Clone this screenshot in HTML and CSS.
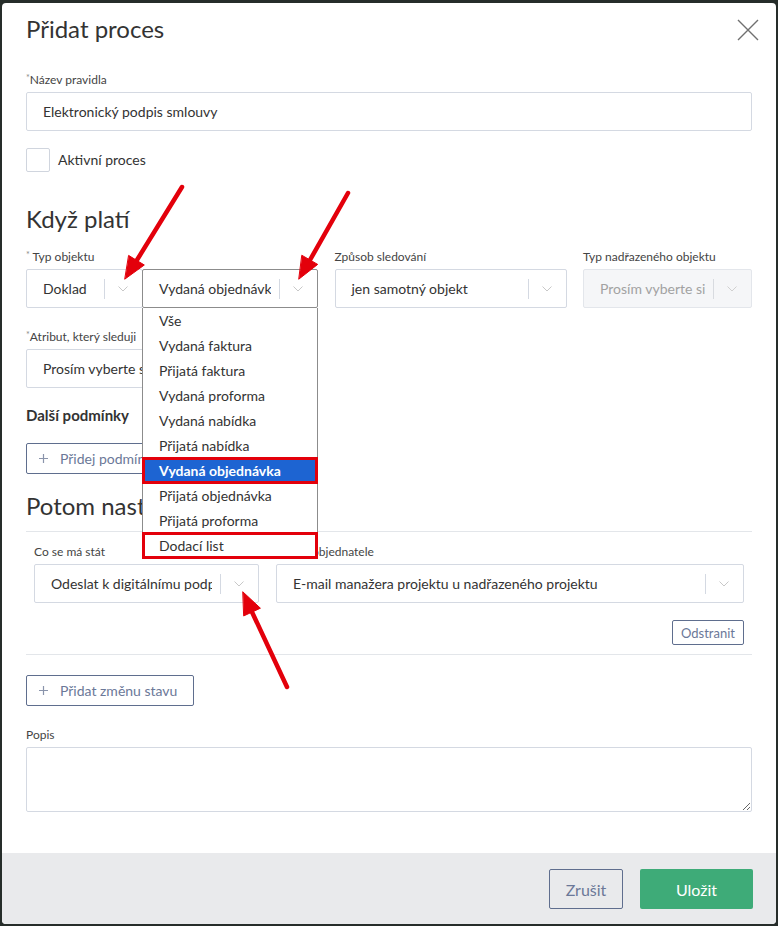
FILE: index.html
```html
<!DOCTYPE html>
<html lang="cs">
<head>
    <meta charset="UTF-8">
    <meta name="viewport" content="width=device-width, initial-scale=1.0">
    <title>Přidat proces</title>
    <link rel="stylesheet" href="styles.css">
</head>
<body>

    <!-- Modal -->
    <div class="modal">
        <div class="modal-header">
            <h1 class="modal-title">Přidat proces</h1>
            <button class="close" type="button" aria-label="Zavřít">
                <svg width="22" height="22" viewBox="0 0 22 22"><path d="M1 1 L21 21 M21 1 L1 21" stroke="#707070" stroke-width="1.4" fill="none"/></svg>
            </button>
        </div>

        <div class="modal-body">
            <div class="field">
                <label class="label"><span class="req">*</span>Název pravidla</label>
                <input class="input" type="text" value="Elektronický podpis smlouvy">
            </div>

            <div class="check-row">
                <span class="checkbox"></span>
                <span>Aktivní proces</span>
            </div>

            <h2 class="section-title">Když platí</h2>

            <div class="row">
                <div class="col col-type">
                    <label class="label"><span class="req req-space">*</span> Typ objektu</label>
                    <div class="select-group">
                        <div class="select select-doc">
                            <div class="select-value">Doklad</div>
                            <div class="select-arrow"><span class="sep"></span><svg class="chev" width="10" height="6" viewBox="0 0 10 6"><path d="M0.5 0.5 L5 5 L9.5 0.5" stroke="#c8c8c8" fill="none"/></svg></div>
                        </div>
                        <div class="select-wrap">
                            <div class="select select-focus">
                                <div class="select-value">Vydaná objednávka</div>
                                <div class="select-arrow"><span class="sep"></span><svg class="chev" width="10" height="6" viewBox="0 0 10 6"><path d="M0.5 0.5 L5 5 L9.5 0.5" stroke="#c8c8c8" fill="none"/></svg></div>
                            </div>
                            <ul class="menu">
                                <li>Vše</li>
                                <li>Vydaná faktura</li>
                                <li>Přijatá faktura</li>
                                <li>Vydaná proforma</li>
                                <li>Vydaná nabídka</li>
                                <li>Přijatá nabídka</li>
                                <li class="active marked">Vydaná objednávka</li>
                                <li>Přijatá objednávka</li>
                                <li>Přijatá proforma</li>
                                <li class="marked">Dodací list</li>
                            </ul>
                        </div>
                    </div>
                </div>
                <div class="col col-track">
                    <label class="label">Způsob sledování</label>
                    <div class="select">
                        <div class="select-value">jen samotný objekt</div>
                        <div class="select-arrow"><span class="sep"></span><svg class="chev" width="10" height="6" viewBox="0 0 10 6"><path d="M0.5 0.5 L5 5 L9.5 0.5" stroke="#c8c8c8" fill="none"/></svg></div>
                    </div>
                </div>
                <div class="col col-parent">
                    <label class="label">Typ nadřazeného objektu</label>
                    <div class="select disabled">
                        <div class="select-value">Prosím vyberte si</div>
                        <div class="select-arrow"><span class="sep"></span><svg class="chev" width="10" height="6" viewBox="0 0 10 6"><path d="M0.5 0.5 L5 5 L9.5 0.5" stroke="#d0d0d0" fill="none"/></svg></div>
                    </div>
                </div>
            </div>

            <div class="field field-attr">
                <label class="label"><span class="req">*</span>Atribut, který sleduji</label>
                <div class="select">
                    <div class="select-value">Prosím vyberte si</div>
                    <div class="select-arrow"><span class="sep"></span><svg class="chev" width="10" height="6" viewBox="0 0 10 6"><path d="M0.5 0.5 L5 5 L9.5 0.5" stroke="#c8c8c8" fill="none"/></svg></div>
                </div>
            </div>

            <h3 class="sub-title">Další podmínky</h3>
            <button class="btn btn-outline btn-add" type="button">
                <svg class="plus" width="9" height="9" viewBox="0 0 9 9"><path d="M4.5 0 V9 M0 4.5 H9" stroke="#8a94ab" stroke-width="1.2"/></svg>
                Přidej podmínku
            </button>

            <h2 class="section-title section-then">Potom nastavit</h2>

            <div class="action-panel">
                <div class="action-row">
                    <div class="action-what">
                        <label class="label">Co se má stát</label>
                        <div class="select">
                            <div class="select-value">Odeslat k digitálnímu podpisu</div>
                            <div class="select-arrow"><span class="sep"></span><svg class="chev" width="10" height="6" viewBox="0 0 10 6"><path d="M0.5 0.5 L5 5 L9.5 0.5" stroke="#c8c8c8" fill="none"/></svg></div>
                        </div>
                    </div>
                    <div class="action-who">
                        <label class="label">E-mail objednatele</label>
                        <div class="select">
                            <div class="select-value">E-mail manažera projektu u nadřazeného projektu</div>
                            <div class="select-arrow"><span class="sep"></span><svg class="chev" width="10" height="6" viewBox="0 0 10 6"><path d="M0.5 0.5 L5 5 L9.5 0.5" stroke="#c8c8c8" fill="none"/></svg></div>
                        </div>
                    </div>
                </div>
                <div class="action-foot">
                    <button class="btn btn-outline btn-small" type="button">Odstranit</button>
                </div>
            </div>

            <button class="btn btn-outline btn-add btn-state" type="button">
                <svg class="plus" width="9" height="9" viewBox="0 0 9 9"><path d="M4.5 0 V9 M0 4.5 H9" stroke="#8a94ab" stroke-width="1.2"/></svg>
                Přidat změnu stavu
            </button>

            <div class="field field-note">
                <label class="label">Popis</label>
                <textarea class="textarea"></textarea>
            </div>
        </div>

        <div class="modal-footer">
            <button class="btn btn-outline btn-cancel" type="button">Zrušit</button>
            <button class="btn btn-save" type="button">Uložit</button>
        </div>
    </div>

    <!-- Red annotation arrows -->
    <svg class="arrows" width="778" height="926" viewBox="0 0 778 926">
        <g stroke="#e3000b" stroke-width="4.5" stroke-linecap="round" fill="#e3000b">
            <line x1="182" y1="187" x2="137" y2="260"/>
            <polygon points="125,279 144.3,265 128.9,255.6" stroke-width="1"/>
            <line x1="348" y1="193" x2="310" y2="260"/>
            <polygon points="299,279 317.7,264.4 302.1,255.4" stroke-width="1"/>
            <line x1="287" y1="687" x2="252" y2="612"/>
            <polygon points="243,592 260.4,608.2 244,615.8" stroke-width="1"/>
        </g>
    </svg>

</body>
</html>
```

FILE: styles.css
```css
/* Page / backdrop */
* {
    box-sizing: border-box;
}

body {
    margin: 0;
    background: #262d2a;
    font-family: "Lato", "Noto Sans", sans-serif;
    font-size: 14px;
    color: #333;
}

/* Modal */
.modal {
    margin: 3px 2px 2px 2px;
    height: 921px;
    background: #fff;
    border-radius: 4px;
    overflow: hidden;
    display: flex;
    flex-direction: column;
}

.modal-header {
    display: flex;
    justify-content: space-between;
    align-items: flex-start;
    padding: 11px 17px 0 24px;
}

.modal-title {
    margin: 0;
    font-size: 24px;
    line-height: 30px;
    font-weight: 400;
    color: #333;
}

.close {
    margin-top: 5px;
    padding: 0;
    border: 0;
    background: none;
    width: 22px;
    height: 22px;
}

.close svg {
    display: block;
}

.modal-body {
    flex: 1;
    padding: 28px 24px 0 24px;
}

/* Fields */
.label {
    display: block;
    font-size: 12px;
    line-height: 16px;
    margin-bottom: 4px;
    color: #444;
}

.req {
    font-size: 9px;
    vertical-align: top;
    line-height: 12px;
    color: #8a8a8a;
}

.input {
    display: block;
    width: 100%;
    height: 39px;
    padding: 0 16px;
    border: 1px solid #d4d9e2;
    border-radius: 2px;
    font-family: inherit;
    font-size: 14px;
    color: #333;
}

.check-row {
    display: flex;
    align-items: center;
    gap: 8px;
    margin-top: 17px;
    line-height: 20px;
}

.checkbox {
    width: 24px;
    height: 24px;
    border: 1px solid #d0d5de;
    border-radius: 2px;
}

.section-title {
    margin: 32px 0 15px 0;
    font-size: 24px;
    line-height: 30px;
    font-weight: 400;
    color: #333;
}

.section-then {
    margin: 17px 0 10px 0;
}

.sub-title {
    margin: 17px 0 18px 0;
    font-size: 15px;
    line-height: 20px;
    font-weight: 700;
    color: #333;
}

/* Selects */
.row {
    display: flex;
    justify-content: space-between;
}

.col-type {
    width: 292px;
}

.col-track {
    width: 232px;
}

.col-parent {
    width: 169px;
}

.select-group {
    display: flex;
}

.select {
    display: flex;
    height: 39px;
    border: 1px solid #d4d9e2;
    border-radius: 2px;
    background: #fff;
}

.select-value {
    flex: 1;
    min-width: 0;
    margin-right: 8px;
    padding-left: 16px;
    line-height: 37px;
    white-space: nowrap;
    overflow: hidden;
}

.select-arrow {
    width: 38px;
    display: flex;
    align-items: center;
}

.select-arrow .sep {
    width: 1px;
    height: 20px;
    background: #d4d9e2;
}

.select-arrow .chev {
    margin-left: 13px;
}

.select-doc {
    width: 118px;
}

.select-wrap {
    position: relative;
    width: 176px;
    margin-left: -1px;
}

.select-focus {
    border-color: #8c8c8c;
}

.select.disabled {
    background: #f5f6f8;
    border-color: #e3e6eb;
    color: #a2a2a2;
}

.select.disabled .sep {
    background: #d8dbe0;
}

/* Dropdown menu */
.menu {
    position: absolute;
    top: 100%;
    left: 0;
    right: 0;
    z-index: 5;
    margin: 0;
    padding: 0;
    list-style: none;
    background: #fff;
    border: 1px solid #8c8c8c;
    border-top: 0;
}

.menu li {
    height: 25px;
    line-height: 25px;
    padding-left: 16px;
    color: #333;
}

.menu li.active {
    background: #1d64d2;
    color: #fff;
    font-weight: 700;
}

.menu li.marked {
    outline: 3px solid #e3000b;
    outline-offset: -2px;
}

.field-attr {
    margin-top: 21px;
    width: 292px;
}

/* Buttons */
.btn {
    font-family: inherit;
    border-radius: 2px;
    cursor: pointer;
}

.btn-outline {
    background: #fff;
    border: 1px solid #5f6e8e;
    color: #6b7898;
}

.btn-add {
    display: flex;
    align-items: center;
    height: 31px;
    padding: 0 16px 0 12px;
    font-size: 14px;
}

.btn-add .plus {
    margin-right: 12px;
}

.btn-state {
    margin-top: 20px;
}

.btn-small {
    height: 25px;
    padding: 0 8px;
    font-size: 13px;
}

/* Action panel */
.action-panel {
    border-top: 1px solid #e3e6ea;
    border-bottom: 1px solid #e3e6ea;
    padding: 12px 8px 9px 8px;
}

.action-row {
    display: flex;
    gap: 17px;
}

.action-what {
    width: 225px;
}

.action-who {
    flex: 1;
}

.action-foot {
    display: flex;
    justify-content: flex-end;
    margin-top: 17px;
}

/* Note */
.field-note {
    margin-top: 21px;
}

.textarea {
    display: block;
    width: 100%;
    height: 65px;
    border: 1px solid #d4d9e2;
    border-radius: 2px;
    font-family: inherit;
}

/* Footer */
.modal-footer {
    display: flex;
    justify-content: flex-end;
    gap: 17px;
    height: 71px;
    padding: 16px 23px 0 0;
    background: #e9eaec;
}

.btn-cancel {
    width: 74px;
    height: 40px;
    background: transparent;
    font-size: 16px;
}

.btn-save {
    width: 113px;
    height: 40px;
    border: 0;
    background: #3eab78;
    color: #fff;
    font-size: 16px;
}

/* Annotation overlay */
.arrows {
    position: absolute;
    top: 0;
    left: 0;
    z-index: 10;
    pointer-events: none;
}
```
